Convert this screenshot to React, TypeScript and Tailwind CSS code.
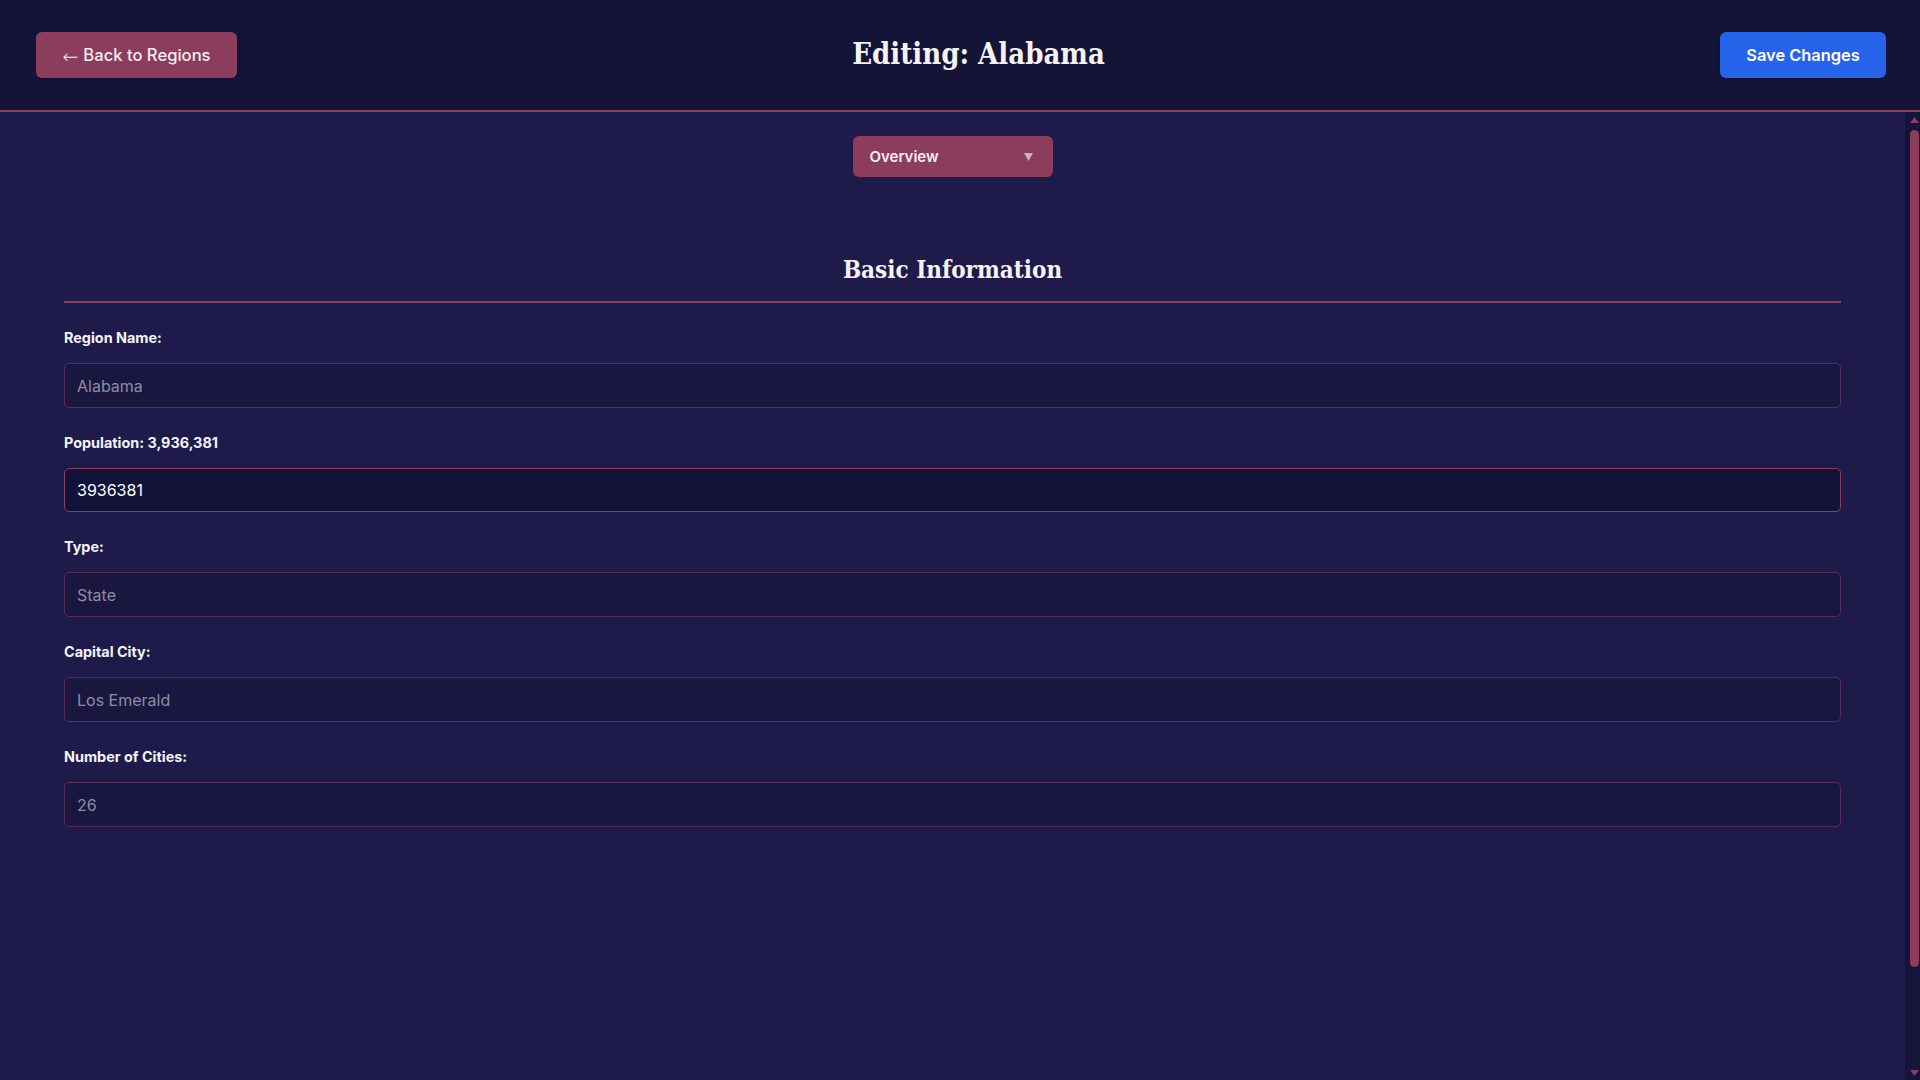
import React from "react";

type FieldProps = {
  label: string;
  value: string;
  active?: boolean;
};

function Field({ label, value, active }: FieldProps) {
  return (
    <div className="mb-[25px]">
      <label className="mb-[15px] block text-[14.4px] leading-5 font-bold text-[#f3f2f8]">
        {label}
      </label>
      <input
        readOnly
        value={value}
        className={`block w-full rounded-[5px] border px-3 text-[16px] outline-none ${
          active
            ? "h-[44px] border-[#8d3d5c] bg-[#131238] text-white"
            : "h-[45px] border-[#5a2c55] bg-[#19173f] text-[#8e8ba6]"
        }`}
      />
    </div>
  );
}

// drawn scrollbar, the page scrollbar is hidden in the capture
function ScrollTrack() {
  return (
    <div className="flex w-[15px] shrink-0 flex-col items-center bg-[#15143a] pl-[3px]">
      <div className="flex h-[15px] items-center justify-center">
        <svg width="9" height="6" viewBox="0 0 9 6">
          <path d="M4.5 0L9 6H0z" fill="#8d3d5c" />
        </svg>
      </div>
      <div className="mt-[3px] h-[837px] w-[9px] rounded-full bg-[#8d3d5c]" />
      <div className="flex-1" />
      <div className="flex h-[15px] items-center justify-center">
        <svg width="9" height="6" viewBox="0 0 9 6">
          <path d="M0 0h9L4.5 6z" fill="#8d3d5c" />
        </svg>
      </div>
    </div>
  );
}

export default function App() {
  return (
    <div className="flex h-screen w-full flex-col overflow-hidden bg-[#1e1b4b] font-['Inter',sans-serif] text-white">
      <header className="flex h-[112px] shrink-0 items-center justify-between border-b-2 border-[#8d3d5c] bg-[#141338] pr-[34px] pl-9">
        <button className="flex h-[46px] w-[201px] items-center justify-center gap-[5px] rounded-md bg-[#8d3d5c] text-[16.6px] font-medium text-[#f3eef6] shadow-sm">
          <span className="pt-[3px] font-['DejaVu_Sans',sans-serif] text-[19px] leading-none font-light">←</span>
          <span>Back to Regions</span>
        </button>
        <h1 className="font-['DejaVu_Serif',serif] text-[29px] font-bold [font-stretch:condensed] text-[#f7f2f2]">
          Editing: Alabama
        </h1>
        <button className="flex h-[46px] w-[166px] items-center justify-center rounded-md bg-[#2563eb] text-[16.4px] font-semibold text-white shadow-sm">
          Save Changes
        </button>
      </header>

      <div className="flex h-[968px]">
        <main className="flex-1 overflow-hidden px-16 pt-6">
          <div className="flex justify-center">
            <div className="flex h-[41px] w-[200px] items-center justify-between rounded-md bg-[#8d3d5c] pt-px pr-5 pl-[17px] text-[15px] font-semibold text-[#f5eef4]">
              <span>Overview</span>
              <svg width="9" height="8" viewBox="0 0 9 8">
                <path d="M0 0h9L4.5 8z" fill="#c4b3c4" />
              </svg>
            </div>
          </div>

          <h2 className="mt-[77px] border-b-2 border-[#8d3d5c] pb-[15px] text-center font-['DejaVu_Serif',serif] text-[24px] leading-8 font-bold [font-stretch:condensed] text-[#f7f2f2]">
            Basic Information
          </h2>

          <div className="mt-[25px]">
            <Field label="Region Name:" value="Alabama" />
            <Field label="Population: 3,936,381" value="3936381" active />
            <Field label="Type:" value="State" />
            <Field label="Capital City:" value="Los Emerald" />
            <Field label="Number of Cities:" value="26" />
          </div>
        </main>
        <ScrollTrack />
      </div>
    </div>
  );
}
